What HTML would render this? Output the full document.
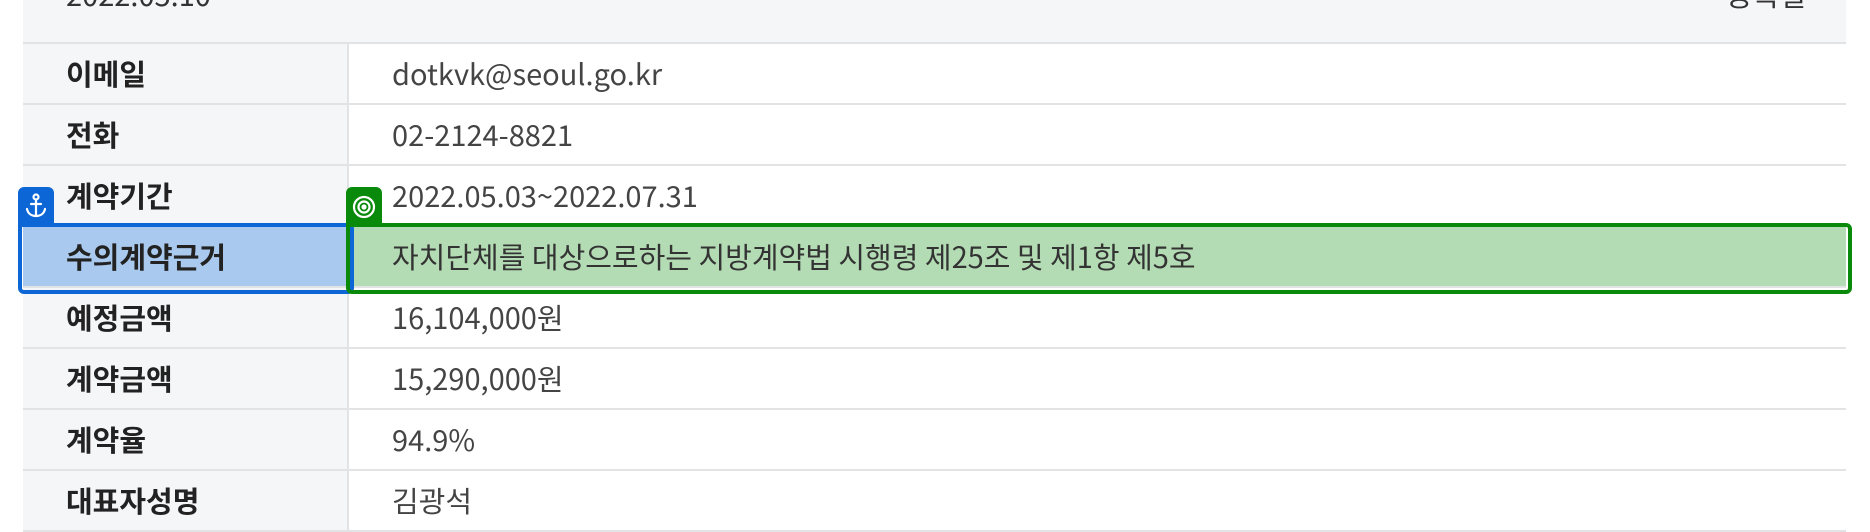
<!DOCTYPE html>
<html><head><meta charset="utf-8"><style>
*{margin:0;padding:0;box-sizing:border-box}
body{width:1870px;height:497px;overflow:hidden;background:#fff;font-family:"Noto Sans CJK KR","Liberation Sans",sans-serif;position:relative}
.top{position:absolute;left:23px;top:0;width:1823px;height:44px;background:#f5f6f8;border-bottom:2px solid #e2e3e5}
.top span{position:absolute;top:-27px;font-size:29px;color:#333}
.row{position:absolute;left:23px;width:1823px;height:61px;border-bottom:2px solid #e2e3e5;background:#fff}
.lab{position:absolute;left:0;top:0;width:326px;height:59px;background:#f5f6f8;border-right:2px solid #e2e3e5;font-weight:bold;font-size:29px;color:#222;line-height:59px;padding-left:43px}
.val{position:absolute;left:369px;top:0;line-height:59px;font-size:29px;color:#444}
.box{position:absolute;border-radius:6px}
.tag{position:absolute;width:36px;height:36px;border-radius:6px 6px 0 0;color:#fff}
</style></head><body>
<div class="top"><span style="left:43px">2022.05.10</span><span style="right:40px">등록일</span></div>
<div class="row" style="top:44px"><div class="lab">이메일</div><div class="val">dotkvk@seoul.go.kr</div></div>
<div class="row" style="top:105px"><div class="lab">전화</div><div class="val">02-2124-8821</div></div>
<div class="row" style="top:166px"><div class="lab">계약기간</div><div class="val">2022.05.03~2022.07.31</div></div>
<div class="row" style="top:227px"><div class="lab" style="background:#a9c9ee">수의계약근거</div><div class="val" style="left:326px;width:1497px;height:59px;background:#b4dcb4;padding-left:43px;color:#333">자치단체를 대상으로하는 지방계약법 시행령 제25조 및 제1항 제5호</div></div>
<div class="row" style="top:288px"><div class="lab">예정금액</div><div class="val">16,104,000원</div></div>
<div class="row" style="top:349px"><div class="lab">계약금액</div><div class="val">15,290,000원</div></div>
<div class="row" style="top:410px"><div class="lab">계약율</div><div class="val">94.9%</div></div>
<div class="row" style="top:471px"><div class="lab">대표자성명</div><div class="val">김광석</div></div>
<div class="box" style="left:18px;top:223px;width:336px;height:71px;border:4px solid #0d66d6;border-top-left-radius:0"></div>
<div class="tag" style="left:18px;top:187px;background:#0d66d6">
<svg width="36" height="36" viewBox="0 0 36 36" fill="none" stroke="#fff" stroke-width="2.2" stroke-linecap="round"><circle cx="18" cy="10" r="2.5"/><path d="M18 12.5V29M13 17h10M9 22c1 5 5 7 9 7s8-2 9-7"/></svg></div>
<div class="box" style="left:346px;top:223px;width:1506px;height:71px;border:4px solid #0a8a0a;border-top-left-radius:0"></div>
<div class="tag" style="left:346px;top:187px;background:#0a8a0a">
<svg width="36" height="36" viewBox="0 0 36 36" fill="none" stroke="#fff" stroke-width="2.2"><circle cx="18" cy="20" r="10"/><circle cx="18" cy="20" r="5.5"/><circle cx="18" cy="20" r="1.5" fill="#fff"/></svg></div>
</body></html>
